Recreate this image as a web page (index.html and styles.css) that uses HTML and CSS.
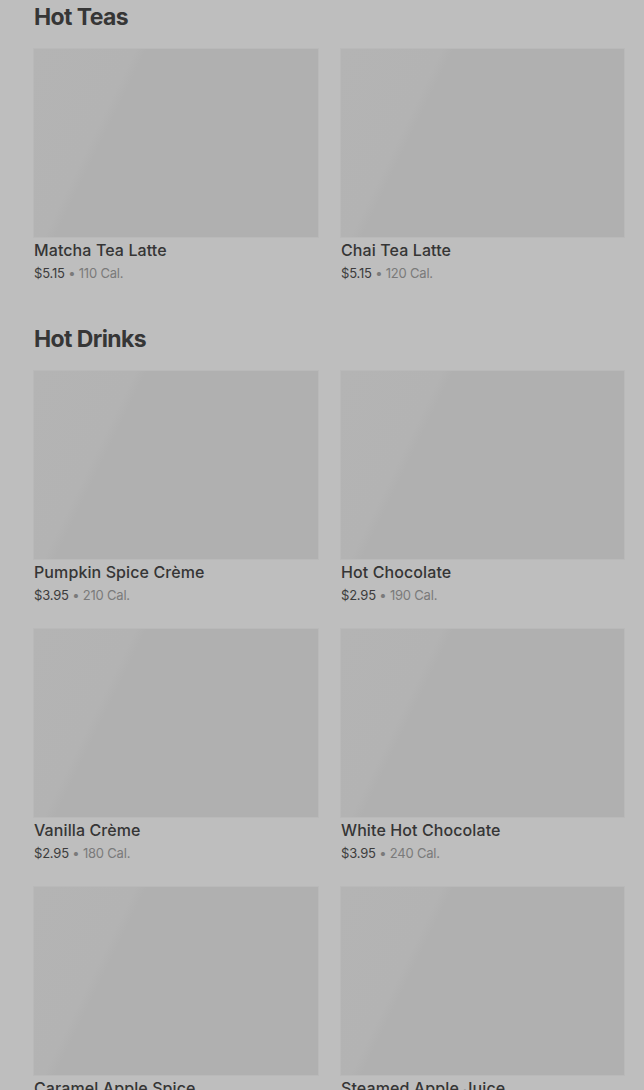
FILE: index.html
```html
<!DOCTYPE html>
<html lang="en">
<head>
    <meta charset="UTF-8">
    <title>Menu</title>
    <link rel="stylesheet" href="styles.css">
</head>
<body>
    <div class="menu">
        <section class="category">
            <h2>Hot Teas</h2>
            <div class="grid">
                <div class="item">
                    <div class="thumb"></div>
                    <div class="name">Matcha Tea Latte</div>
                    <div class="meta"><span class="price">$5.15</span> • 110 Cal.</div>
                </div>
                <div class="item">
                    <div class="thumb"></div>
                    <div class="name">Chai Tea Latte</div>
                    <div class="meta"><span class="price">$5.15</span> • 120 Cal.</div>
                </div>
            </div>
        </section>

        <section class="category">
            <h2>Hot Drinks</h2>
            <div class="grid">
                <div class="item">
                    <div class="thumb"></div>
                    <div class="name">Pumpkin Spice Crème</div>
                    <div class="meta"><span class="price">$3.95</span> • 210 Cal.</div>
                </div>
                <div class="item">
                    <div class="thumb"></div>
                    <div class="name">Hot Chocolate</div>
                    <div class="meta"><span class="price">$2.95</span> • 190 Cal.</div>
                </div>
                <div class="item">
                    <div class="thumb"></div>
                    <div class="name">Vanilla Crème</div>
                    <div class="meta"><span class="price">$2.95</span> • 180 Cal.</div>
                </div>
                <div class="item">
                    <div class="thumb"></div>
                    <div class="name">White Hot Chocolate</div>
                    <div class="meta"><span class="price">$3.95</span> • 240 Cal.</div>
                </div>
                <div class="item">
                    <div class="thumb"></div>
                    <div class="name">Caramel Apple Spice</div>
                    <div class="meta"><span class="price">$3.95</span> • 380 Cal.</div>
                </div>
                <div class="item">
                    <div class="thumb"></div>
                    <div class="name">Steamed Apple Juice</div>
                    <div class="meta"><span class="price">$3.45</span> • 250 Cal.</div>
                </div>
            </div>
        </section>
    </div>
</body>
</html>
```

FILE: styles.css
```css
html, body {
    margin: 0;
    background: #bebebe;
    height: 1090px;
    overflow: hidden;
}
body {
    font-family: Inter, "Noto Sans", sans-serif;
    color: #333;
}
.menu {
    padding: 2px 20px 0 34px;
}
.category {
    margin-bottom: 42px;
}
.category h2 {
    margin: 0 0 17px;
    font-size: 23px;
    line-height: 30px;
    font-weight: 700;
    letter-spacing: -0.6px;
    color: #363636;
}
.grid {
    display: grid;
    grid-template-columns: 284px 283px;
    column-gap: 23px;
    row-gap: 25px;
}
.thumb {
    height: 188px;
    background: linear-gradient(116deg, #b4b4b4 0%, #b3b3b3 27%, #b0b0b0 30%, #b0b0b0 100%);
    box-shadow: 0 0 0 1px #b9b9b9;
}
.name {
    margin-top: 2px;
    font-size: 16px;
    line-height: 22px;
    font-weight: 500;
    letter-spacing: 0.1px;
    color: #353535;
}
.meta {
    margin-top: 3px;
    font-size: 13px;
    line-height: 18px;
    color: #7a7a7a;
    letter-spacing: -0.2px;
}
.price {
    color: #3c3c3c;
}
```
